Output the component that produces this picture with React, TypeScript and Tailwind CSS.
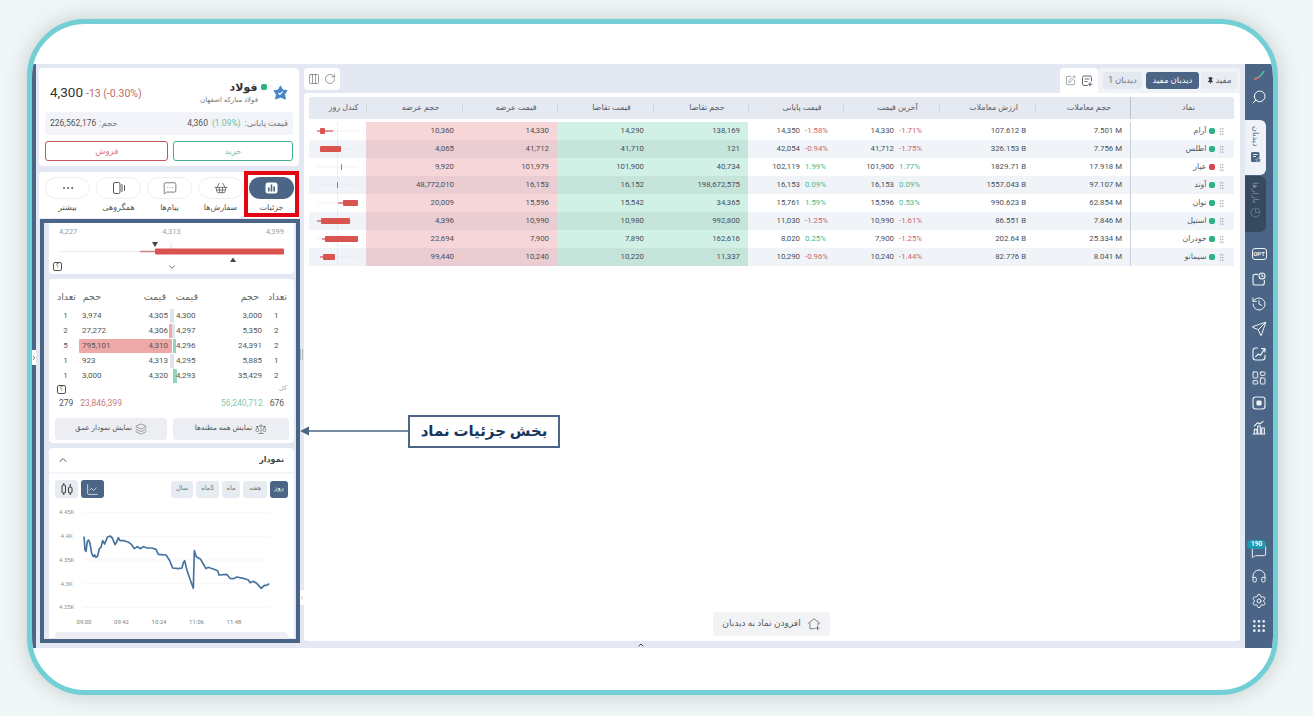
import {
  ChartColumnBig,
  ChartLine,
  ChevronDown,
  ChevronLeft,
  ChevronRight,
  ChevronUp,
  Ellipsis,
  Grip,
  GripVertical,
  Headphones,
  History,
  LayoutDashboard,
  Layers,
  MessageSquareMore,
  Pin,
  RotateCw,
  Scale,
  Search,
  Send,
  Settings,
  ShoppingBasket,
  SquarePen,
  Columns3,
  MessageSquare,
  PieChart,
} from "lucide-react";

const rows = [
  { name: "آرام", up: true, vol: "7.501 M", value: "107.612 B", last: "14,330", lastPct: "-1.71%", close: "14,350", closePct: "-1.58%", bidVol: "138,169", bid: "14,290", ask: "14,330", askVol: "10,360", candle: [11, 16, 8, 24] },
  { name: "اطلس", up: true, vol: "7.756 M", value: "326.153 B", last: "41,712", lastPct: "-1.75%", close: "42,054", closePct: "-0.94%", bidVol: "121", bid: "41,710", ask: "41,712", askVol: "4,065", candle: [11, 32, 11, 32] },
  { name: "عیار", up: false, vol: "17.918 M", value: "1829.71 B", last: "101,900", lastPct: "1.77%", close: "102,119", closePct: "1.99%", bidVol: "40,734", bid: "101,900", ask: "101,979", askVol: "9,920", candle: [32, 32.6, 32, 32.6] },
  { name: "آوند", up: true, vol: "97.107 M", value: "1557.043 B", last: "16,153", lastPct: "0.09%", close: "16,153", closePct: "0.09%", bidVol: "198,672,575", bid: "16,152", ask: "16,153", askVol: "48,772,010", candle: [28.2, 28.8, 28.2, 28.8] },
  { name: "توان", up: true, vol: "62.854 M", value: "990.623 B", last: "15,596", lastPct: "0.53%", close: "15,761", closePct: "1.59%", bidVol: "34,365", bid: "15,542", ask: "15,596", askVol: "20,009", candle: [34, 49, 29, 49] },
  { name: "استیل", up: true, vol: "7.846 M", value: "86.551 B", last: "10,990", lastPct: "-1.61%", close: "11,030", closePct: "-1.25%", bidVol: "992,800", bid: "10,980", ask: "10,990", askVol: "4,396", candle: [12, 41, 8, 41] },
  { name: "خودران", up: true, vol: "25.334 M", value: "202.64 B", last: "7,900", lastPct: "-1.25%", close: "8,020", closePct: "0.25%", bidVol: "162,616", bid: "7,890", ask: "7,900", askVol: "22,694", candle: [16, 49, 13, 49] },
  { name: "سیمانو", up: true, vol: "8.041 M", value: "82.776 B", last: "10,240", lastPct: "-1.44%", close: "10,290", closePct: "-0.96%", bidVol: "11,337", bid: "10,220", ask: "10,240", askVol: "99,440", candle: [14, 26, 11, 26] },
];

const depth = [
  { sc: "1", sv: "3,974", sp: "4,305", bp: "4,300", bv: "3,000", bc: "1", red: "w-0", right: "left-[115px] w-[4px] bg-[#dfe3ea]" },
  { sc: "2", sv: "27,272", sp: "4,306", bp: "4,297", bv: "5,350", bc: "2", red: "w-[3.5px]", right: "left-[117px] w-[2.5px] bg-[#dfe3ea]" },
  { sc: "5", sv: "795,101", sp: "4,310", bp: "4,296", bv: "24,391", bc: "2", red: "w-[93px]", right: "left-[118px] w-[2.5px] bg-[#8fd6bc]" },
  { sc: "1", sv: "923", sp: "4,313", bp: "4,295", bv: "5,885", bc: "1", red: "w-0", right: "left-[115px] w-[4px] bg-[#dfe3ea]" },
  { sc: "1", sv: "3,000", sp: "4,320", bp: "4,293", bv: "35,429", bc: "2", red: "w-0", right: "left-[118px] w-[3.5px] bg-[#8fd6bc]" },
];

const linePoints =
  "162,290 165,330 168,334 172,304 176,300 180,310 185,340 190,350 194,345 198,352 203,348 208,326 213,322 218,302 224,312 232,292 240,288 247,294 255,314 260,306 265,293 270,302 282,302 296,307 305,314 313,326 322,320 332,326 340,320 352,324 365,324 378,328 385,343 408,345 418,360 428,384 445,386 456,384 460,368 464,362 470,388 480,418 490,445 493,332 499,350 512,358 520,372 528,386 534,382 552,388 563,392 567,405 590,403 600,415 612,416 620,411 640,415 655,420 660,428 670,424 680,430 694,445 703,436 710,436 718,431";

function Dot({ up }: { up: boolean }) {
  return <span className={`h-[6.5px] w-[6.5px] rounded-[2px] ${up ? "bg-[#2bb184]" : "bg-[#d9444a]"}`} />;
}

function Candle({ c }: { c: number[] }) {
  const green = c[0] === 28.2;
  return (
    <svg width="57" height="18" viewBox="0 0 57 18">
      <line x1="8" y1="9" x2="49" y2="9" stroke="#e6e8ec" strokeWidth="0.6" />
      <line x1="28.5" y1="0" x2="28.5" y2="18" stroke="#c4ccd6" strokeWidth="0.6" strokeDasharray="1 1" />
      {green ? (
        <rect x="28" y="6" width="1" height="6" fill="#2bb184" />
      ) : c[1] - c[0] < 2 ? (
        <rect x="32" y="6" width="0.8" height="6" fill="#b5484c" />
      ) : (
        <>
          <rect x={c[2]} y="8.4" width={c[3] - c[2]} height="1.2" fill="#d9534f" />
          <rect x={c[0]} y="6" width={c[1] - c[0]} height="6" rx="1" fill="#d9534f" />
        </>
      )}
    </svg>
  );
}

function Pct({ v }: { v: string }) {
  return <span className={`w-[25px] text-left ${v.startsWith("-") ? "text-[#c9686b]" : "text-[#3fb98f]"}`}>{v}</span>;
}

function HeaderCell({ label, divider = true, strong = false }: { label: string; divider?: boolean; strong?: boolean }) {
  return (
    <div className={`flex h-[22px] items-center justify-center ${strong ? "border-l border-[#b9c2cf]" : ""}`}>
      <span className="flex-1 pl-[12px] text-center">{label}</span>
      {divider && !strong && <span className="h-[9px] w-px bg-[#cfd6e0]" />}
    </div>
  );
}

function WatchTable() {
  const cols = "grid grid-cols-[104px_95px_96px_96px_95px_95px_96px_95px_96px_57px]";
  return (
    <div dir="rtl" className="ml-[5px] mr-[6px] mt-[4px] text-[7.8px] text-[#4a4f57]">
      <div className={`${cols} rounded-t-[3px] bg-[#e4e9f2] text-[8px] text-[#555b64]`}>
        <HeaderCell label="نماد" strong />
        <HeaderCell label="حجم معاملات" />
        <HeaderCell label="ارزش معاملات" />
        <HeaderCell label="آخرین قیمت" />
        <HeaderCell label="قیمت پایانی" />
        <HeaderCell label="حجم تقاضا" />
        <HeaderCell label="قیمت تقاضا" />
        <HeaderCell label="قیمت عرضه" />
        <HeaderCell label="حجم عرضه" />
        <HeaderCell label="کندل روز" divider={false} />
      </div>
      <div className="mt-[3px]">
        {rows.map((r, i) => {
          const alt = i % 2 === 1;
          return (
            <div key={r.name} className={`${cols} h-[18px] items-center ${alt ? "bg-[#f0f4f9]" : "bg-white"}`}>
              <div className="flex h-full items-center gap-[2px] border-l border-[#c9d0da] pr-[8px]">
                <GripVertical className="h-[9px] w-[9px] text-[#9aa3ad]" strokeWidth={1.5} />
                <Dot up={r.up} />
                <span className="text-[#555b64]">{r.name}</span>
              </div>
              <div dir="ltr" className="pr-[8px] text-right">{r.vol}</div>
              <div dir="ltr" className="pr-[9px] text-right">{r.value}</div>
              <div dir="ltr" className="flex gap-[5px] pr-[15px]">
                <span className="flex-1 text-right">{r.last}</span>
                <Pct v={r.lastPct} />
              </div>
              <div dir="ltr" className="flex gap-[5px] pr-[13px]">
                <span className="flex-1 text-right">{r.close}</span>
                <Pct v={r.closePct} />
              </div>
              <div dir="ltr" className={`flex h-full items-center justify-end pr-[8px] ${alt ? "bg-[#c5e4da]" : "bg-[#d1f1e6]"}`}>{r.bidVol}</div>
              <div dir="ltr" className={`flex h-full items-center justify-end pr-[9px] ${alt ? "bg-[#c5e4da]" : "bg-[#d1f1e6]"}`}>{r.bid}</div>
              <div dir="ltr" className={`flex h-full items-center justify-end pr-[8px] ${alt ? "bg-[#e9cdd2]" : "bg-[#f6d6d8]"}`}>{r.ask}</div>
              <div dir="ltr" className={`flex h-full items-center justify-end pr-[8px] ${alt ? "bg-[#e9cdd2]" : "bg-[#f6d6d8]"}`}>{r.askVol}</div>
              <div dir="ltr" className="h-[18px] overflow-hidden"><Candle c={r.candle} /></div>
            </div>
          );
        })}
      </div>
    </div>
  );
}

function MainPanel() {
  return (
    <div className="flex w-[941px] flex-col pr-[5px]">
      <div dir="ltr" className="flex h-[29px] items-start justify-between pt-[4px]">
        <div className="flex h-[22px] w-[36px] items-center justify-center gap-[4px] rounded-[4px] bg-white text-[#555b64]">
          <Columns3 className="h-[12px] w-[12px]" strokeWidth={1.2} />
          <RotateCw className="h-[12px] w-[12px]" strokeWidth={1.2} />
        </div>
        <div className="flex items-start">
          <div className="flex h-[25px] w-[38px] items-center justify-center gap-[5px] rounded-t-[4px] bg-white text-[#555b64]">
            <SquarePen className="h-[11px] w-[11px]" strokeWidth={1.2} />
            <svg width="12" height="12" viewBox="0 0 24 24" fill="none" stroke="currentColor" strokeWidth="1.800" strokeLinecap="round">
              <path d="M13 21H6a3 3 0 0 1-3-3V5a3 3 0 0 1 3-3h12a3 3 0 0 1 3 3v7" />
              <path d="M8 8h8M8 13h4M18 15v7M14.500 18.500h7" />
            </svg>
          </div>
          <div dir="rtl" className="flex h-[25px] w-[142px] items-start gap-[2px] rounded-t-[4px] bg-[#f0f3f8] pr-[3px] pt-[4px] text-[8.5px]">
            <span className="flex h-[17px] w-[36px] items-center justify-center gap-[2px] rounded-[3px] bg-[#e9ecf3] text-[#555b64]">
              مفید
              <Pin className="h-[7px] w-[7px] fill-[#333] text-[#333]" />
            </span>
            <span className="flex h-[17px] w-[53px] items-center justify-center rounded-[3px] bg-[#4a6585] text-white">دیدبان مفید</span>
            <span className="mr-[2px] flex h-[17px] w-[39px] items-center justify-center rounded-[3px] bg-[#e4e8f0] text-[#6b7280]">دیدبان 1</span>
          </div>
        </div>
      </div>
      <div className="relative h-[548px] rounded-[3px] bg-white">
        <WatchTable />
        <div dir="rtl" className="absolute bottom-[5px] left-[409px] flex h-[24px] w-[117px] items-center justify-center gap-[6px] rounded-[4px] bg-[#f2f3f5] text-[9px] text-[#555b64]">
          <svg width="14" height="14" viewBox="0 0 24 24" fill="none" stroke="currentColor" strokeWidth="1.300" strokeLinecap="round">
            <path d="M2 11 12 3l10 8M5 11v9h8M19 11v3M18 16v6M15 19h6" />
          </svg>
          <span>افزودن نماد به دیدبان</span>
        </div>
      </div>
    </div>
  );
}

function SymbolCard() {
  return (
    <div className="h-[98px] rounded-[4px] bg-white px-[6px]">
      <div dir="ltr" className="flex h-[44px] items-center justify-between pl-[5px] pr-[5px] pt-[4px]">
        <div className="flex items-baseline gap-[3px]">
          <span className="text-[13.5px] text-[#333]">4,300</span>
          <span className="text-[10.5px] text-[#bd6a6c]">-13 (-0.30%)</span>
        </div>
        <div className="flex items-center gap-[6px]">
          <div dir="rtl" className="flex flex-col">
            <div className="flex items-center gap-[3px]">
              <span className="h-[6.5px] w-[6.5px] rounded-[2px] bg-[#2bb184]" />
              <span className="text-[11px] font-semibold leading-[15px] text-[#333]">فولاد</span>
            </div>
            <span className="pr-[9px] text-[7px] leading-[10px] text-[#777]">فولاد مبارکه اصفهان</span>
          </div>
          <svg width="15" height="15" viewBox="0 0 24 24">
            <path d="M12 1.500 15.500 8 22.500 9 18.500 15 20 22.500 12 19.500 4 22.500 5.500 15 1.500 9 8.500 8Z" fill="#4a86c5" stroke="#4a86c5" strokeWidth="1.500" strokeLinejoin="round" />
            <path d="M8.500 12.500l2.500 2.500 4.500-4.500" fill="none" stroke="#fff" strokeWidth="1.800" />
          </svg>
        </div>
      </div>
      <div dir="ltr" className="flex h-[23px] items-center justify-between rounded-[3px] bg-[#f2f4f9] px-[5px] text-[8.5px] text-[#555]">
        <span className="flex gap-[3px]">
          <span>226,562,176</span>
          <span className="text-[#777]">:حجم</span>
        </span>
        <span className="flex gap-[4px]">
          <span>4,360</span>
          <span className="text-[#6cbf9d]">(1.09%)</span>
          <span className="text-[#777]">:قیمت پایانی</span>
        </span>
      </div>
      <div dir="ltr" className="mt-[6px] flex gap-[5px] text-[8.5px]">
        <button className="h-[20px] w-[124px] rounded-[3px] border-[1.5px] border-[#c3575b] text-[#cf7d80]">فروش</button>
        <button className="h-[20px] w-[120px] rounded-[3px] border-[1.5px] border-[#46ad8b] text-[#74bfa4]">خرید</button>
      </div>
    </div>
  );
}

function DetailsGlyph() {
  return (
    <svg width="13" height="12" viewBox="0 0 13 12">
      <rect x="0.500" y="0.500" width="12" height="11" rx="2.500" fill="#fff" />
      <path d="M3 5.500h1.600V9.500H3zM5.700 2.500h1.600v7H5.700zM8.400 4.500H10v5H8.400z" fill="#4a6585" />
    </svg>
  );
}

function GroupGlyph() {
  return (
    <svg width="14" height="14" viewBox="0 0 14 14" fill="none" stroke="currentColor" strokeWidth="1">
      <rect x="1.500" y="1.500" width="6.500" height="11" rx="1.500" />
      <path d="M10 3.500v7M12.500 4.500v5" strokeLinecap="round" />
    </svg>
  );
}

function ActionTabs() {
  const iconCls = "h-[14px] w-[14px]";
  const items = [
    { label: "جزئیات", icon: <DetailsGlyph />, active: true },
    { label: "سفارش‌ها", icon: <ShoppingBasket className={iconCls} strokeWidth={1.3} /> },
    { label: "پیام‌ها", icon: <MessageSquareMore className={iconCls} strokeWidth={1.3} /> },
    { label: "همگروهی", icon: <GroupGlyph /> },
    { label: "بیشتر", icon: <Ellipsis className={iconCls} strokeWidth={1.6} /> },
  ];
  return (
    <div dir="rtl" className="mt-[6px] flex h-[46px] gap-[6px] rounded-t-[4px] bg-white px-[5px] pt-[5px]">
      {items.map(({ label, icon, active }) => (
        <div key={label} className="flex w-[45px] flex-col items-center">
          <div className={`flex h-[22px] w-full items-center justify-center rounded-full ${active ? "bg-[#4a6585] text-white" : "border border-[#eceef2] text-[#555]"}`}>
            {icon}
          </div>
          <span className="mt-[2px] whitespace-nowrap text-[8px] leading-[14px] text-[#555]">{label}</span>
        </div>
      ))}
    </div>
  );
}

function Help() {
  return <span className="flex h-[9px] w-[9px] items-center justify-center rounded-[2px] border border-[#555] text-[6.5px] leading-none text-[#555]">؟</span>;
}

function RangeCard() {
  return (
    <div className="relative h-[51px] rounded-b-[4px] bg-white text-[7.5px] text-[#9aa0a8]">
      <div className="flex justify-between px-[10px] pt-[3px]">
        <span>4,227</span>
        <span>4,313</span>
        <span>4,399</span>
      </div>
      <svg className="mt-[2px] ml-[10px]" width="226" height="23" viewBox="0 0 226 23">
        <line x1="0" y1="12.5" x2="82" y2="12.5" stroke="#eeeeee" strokeWidth="1.500" />
        <line x1="81" y1="12.500" x2="96" y2="12.500" stroke="#cf8183" strokeWidth="1.500" />
        <line x1="112" y1="3" x2="112" y2="12" stroke="#e2e4e8" />
        <rect x="96" y="9.500" width="129" height="6" rx="1" fill="#d9534f" />
        <polygon points="93,3 99,3 96,8" fill="#444" />
        <polygon points="171,23 177,23 174,18.500" fill="#444" />
      </svg>
      <div className="absolute bottom-[3px] left-[4px]"><Help /></div>
      <ChevronDown className="absolute bottom-[2px] left-[118px] h-[10px] w-[10px] text-[#555]" />
    </div>
  );
}

function DepthCard() {
  return (
    <div dir="ltr" className="mt-[5px] h-[164px] rounded-[4px] bg-white px-[6px] text-[8px] text-[#555]">
      <div dir="rtl" className="flex h-[24px] items-end text-[9.5px] leading-[13px] text-[#666]">
        <span className="w-[29px] whitespace-nowrap pr-[1px]">تعداد</span>
        <span className="w-[61px] whitespace-nowrap">حجم</span>
        <span className="w-[32px] whitespace-nowrap">قیمت</span>
        <span className="w-[65px] whitespace-nowrap">قیمت</span>
        <span className="w-[25px] whitespace-nowrap">حجم</span>
        <span className="whitespace-nowrap">تعداد</span>
      </div>
      <div className="mt-[5px]">
        {depth.map((d) => (
          <div key={d.sp} className="relative flex h-[15px] items-center">
            <span className={`absolute right-[116px] top-[0.5px] h-[14px] rounded-l-[1px] bg-[#eda8a8] ${d.red}`} />
            <span className={`absolute top-[0.5px] h-[14px] ${d.right}`} />
            <span className="relative w-[21px] text-center">{d.sc}</span>
            <span className="relative w-[70px] pl-[6px]">{d.sv}</span>
            <span className="relative w-[22px] text-right">{d.sp}</span>
            <span className="relative ml-[8px] w-[50px]">{d.bp}</span>
            <span className="relative w-[36px] text-right">{d.bv}</span>
            <span className="relative flex-1 pl-[12px]">{d.bc}</span>
          </div>
        ))}
      </div>
      <div className="flex h-[12px] items-center justify-between pl-[2px] pr-[1px]">
        <Help />
        <span className="text-[6.5px] text-[#aaa]">کل</span>
      </div>
      <div className="mt-[2px] flex items-center justify-between px-[4px] text-[8.5px]">
        <span className="flex gap-[7px]">
          <span>279</span>
          <span className="text-[#c47c7e]">23,846,399</span>
        </span>
        <span className="flex gap-[7px]">
          <span className="text-[#7fc9aa]">56,240,712</span>
          <span>676</span>
        </span>
      </div>
      <div className="-mr-px mt-[8px] flex justify-between text-[7.3px]">
        <button className="flex h-[22px] w-[112px] items-center justify-center gap-[3px] rounded-[4px] bg-[#eceef4]">
          <span>نمایش نمودار عمق</span>
          <Layers className="h-[12px] w-[12px]" strokeWidth={1.1} />
        </button>
        <button className="flex h-[22px] w-[116px] items-center justify-center gap-[3px] rounded-[4px] bg-[#eceef4]">
          <span>نمایش همه مظنه‌ها</span>
          <Scale className="h-[12px] w-[12px]" strokeWidth={1.1} />
        </button>
      </div>
    </div>
  );
}

function ChartCard() {
  const ranges = [
    { l: "روز", w: "w-[18px]", on: true },
    { l: "هفته", w: "w-[24px]" },
    { l: "ماه", w: "w-[18px]" },
    { l: "3ماه", w: "w-[23px]" },
    { l: "سال", w: "w-[22px]" },
  ];
  return (
    <div className="mt-[5px] h-[190px] rounded-t-[4px] bg-white">
      <div dir="ltr" className="flex h-[26px] items-center justify-between border-b-2 border-[#f3f5f9] pl-[8px] pr-[10px]">
        <ChevronUp className="h-[12px] w-[12px] text-[#555]" />
        <span className="text-[8px] font-bold text-[#444]">نمودار</span>
      </div>
      <div dir="ltr" className="flex items-center justify-between px-[6px] pt-[6px]">
        <div className="flex gap-[3px]">
          <span className="flex h-[18px] w-[23px] items-center justify-center rounded-[3px] bg-[#e7ebf2] text-[#444]">
            <svg width="14" height="14" viewBox="0 0 14 14" fill="none" stroke="currentColor" strokeWidth="1.100">
              <rect x="2" y="3" width="3.500" height="8" rx="1.500" />
              <rect x="8.500" y="5" width="3.500" height="6" rx="1.500" />
              <path d="M3.750 1v2M3.750 11v2M10.250 2v3M10.250 11v2" />
            </svg>
          </span>
          <span className="flex h-[18px] w-[23px] items-center justify-center rounded-[3px] bg-[#4a6585] text-white">
            <ChartLine className="h-[13px] w-[13px]" strokeWidth={1.3} />
          </span>
        </div>
        <div dir="rtl" className="flex gap-[3px] text-[6.5px]">
          {ranges.map((r) => (
            <span key={r.l} className={`flex h-[17px] items-center justify-center rounded-[3px] ${r.w} ${r.on ? "bg-[#4a6585] text-white" : "bg-[#e7ebf2] text-[#777]"}`}>{r.l}</span>
          ))}
        </div>
      </div>
      <svg className="mt-[7px]" width="245" height="126" viewBox="57 195 735 378">
        {[217, 289, 360, 431, 502].map((y, i) => (
          <g key={y}>
            <line x1="160" y1={y} x2="718" y2={y} stroke="#eef0f4" strokeWidth="2" />
            <text x="110" y={y + 6} textAnchor="middle" fontSize="18" fill="#8a9099">{["4.45K", "4.4K", "4.35K", "4.3K", "4.25K"][i]}</text>
          </g>
        ))}
        {["09:00", "09:42", "10:24", "11:06", "11:48"].map((t, i) => (
          <text key={t} x={162 + i * 112.500} y="551" textAnchor="middle" fontSize="18" fill="#7c828b">{t}</text>
        ))}
        <polyline points={linePoints} fill="none" stroke="#44739f" strokeWidth="5" strokeLinejoin="round" />
      </svg>
      <div className="mx-[6px] mt-[1px] h-[12px] rounded-t-[4px] bg-[#eceef4]" />
    </div>
  );
}

function LeftPanel() {
  return (
    <div className="relative flex h-[577px] w-[268px] flex-col pl-[3px] pr-[5px] pt-[4px]">
      <SymbolCard />
      <ActionTabs />
      <div className="mt-[5px] h-[417px] overflow-hidden pl-[10px] pr-[5px]">
        <RangeCard />
        <DepthCard />
        <ChartCard />
      </div>
    </div>
  );
}

function RailIcon({ children }: { children: React.ReactNode }) {
  return <div className="flex h-[24.8px] items-center justify-center text-[#eef2f6]">{children}</div>;
}

function RailSvg({ children }: { children: React.ReactNode }) {
  return (
    <svg width="16" height="16" viewBox="0 0 24 24" fill="none" stroke="currentColor" strokeWidth="1.700" strokeLinecap="round" strokeLinejoin="round">
      {children}
    </svg>
  );
}

function Sidebar() {
  const cls = "h-[16px] w-[16px]";
  return (
    <div className="relative flex h-[584px] w-[28px] flex-col bg-[#4a6585]">
      <svg className="ml-[8px] mt-[6px]" width="12" height="10" viewBox="0 0 12 10">
        <path d="M1 9 C5 8 9 5 11 1" fill="none" stroke="#52c7a6" strokeWidth="1.600" />
        <path d="M1 9 C3 9 5 8 6 7" fill="none" stroke="#e0696b" strokeWidth="1.600" />
      </svg>
      <Search className="ml-[6px] mt-[9px] h-[16px] w-[16px] -scale-x-100 text-white" strokeWidth={1.5} />
      <div className="mt-[15px] flex h-[55px] w-[21px] flex-col items-center rounded-r-[6px] bg-[#eff2f7] pt-[6px] text-[#4a6585]">
        <span className="text-[8px] leading-[21px] [writing-mode:vertical-rl]">دیدبان</span>
        <svg className="mt-[4px]" width="12" height="12" viewBox="0 0 12 12">
          <rect x="1" y="1" width="8.500" height="10" rx="1.500" fill="#4a6585" />
          <path d="M3 3.500h4.500M3 5.500h3" stroke="#fff" strokeWidth="0.800" />
          <path d="M8.500 6.500l1 1.700 1.800.3-1.300 1.300.3 1.700-1.800-.8-1.800.8.300-1.700-1.300-1.300 1.800-.3z" fill="#4a6585" stroke="#eff2f7" strokeWidth="0.500" />
        </svg>
      </div>
      <div className="mt-[1px] flex h-[56px] w-[21px] flex-col items-center rounded-r-[6px] bg-[#36495f] pt-[6px] text-[#7d8fa5]">
        <span className="text-[8px] leading-[21px] [writing-mode:vertical-rl]">بازارها</span>
        <PieChart className="mt-[4px] h-[11px] w-[11px]" strokeWidth={1.5} />
      </div>
      <div className="mt-[10px] flex flex-col">
        <RailIcon>
          <span className="flex h-[12px] w-[15px] items-center justify-center rounded-[3px] border border-[#eef2f6] text-[6px] font-bold leading-none">OPT</span>
        </RailIcon>
        <RailIcon>
          <RailSvg>
            <path d="M10 5H6a3 3 0 0 0-3 3v10a3 3 0 0 0 3 3h11a3 3 0 0 0 3-3v-4" />
            <circle cx="16.500" cy="7.500" r="4.500" />
            <path d="M16.500 5.500v2l1.500 1" />
          </RailSvg>
        </RailIcon>
        <RailIcon><History className={cls} strokeWidth={1.5} /></RailIcon>
        <RailIcon><Send className={cls} strokeWidth={1.5} /></RailIcon>
        <RailIcon>
          <RailSvg>
            <path d="M10 3H7a4 4 0 0 0-4 4v10a4 4 0 0 0 4 4h10a4 4 0 0 0 4-4v-3" />
            <path d="M7 16l4-4 3 2 6-9M16 4h5v5" />
          </RailSvg>
        </RailIcon>
        <RailIcon><LayoutDashboard className={cls} strokeWidth={1.5} /></RailIcon>
        <RailIcon>
          <RailSvg>
            <rect x="3" y="3" width="18" height="18" rx="4" />
            <rect x="9" y="9" width="6" height="6" rx="1" fill="currentColor" />
          </RailSvg>
        </RailIcon>
        <RailIcon>
          <RailSvg>
            <path d="M3 21h18M5 21v-7h4v7M10 21V9h4v12M16 21v-9h4v9M5 9l5-5 3 2 5-4" />
          </RailSvg>
        </RailIcon>
      </div>
      <div className="absolute bottom-[10px] left-0 flex w-full flex-col">
        <div className="relative">
          <RailIcon><MessageSquare className={cls} strokeWidth={1.5} /></RailIcon>
          <span className="absolute left-[2px] top-[1px] rounded-full bg-[#1d9bb2] px-[4px] text-[6.5px] font-bold leading-[9px] text-white">190</span>
        </div>
        <RailIcon><Headphones className={cls} strokeWidth={1.5} /></RailIcon>
        <RailIcon><Settings className={cls} strokeWidth={1.5} /></RailIcon>
        <RailIcon><Grip className={cls} strokeWidth={2} /></RailIcon>
      </div>
    </div>
  );
}

export default function App() {
  return (
    <div dir="ltr" className="relative h-[716px] w-[1313px] overflow-hidden bg-[#f1f7f6] pl-[27px] pt-[19px] font-['Roboto','DejaVu_Sans',sans-serif]">
      <div className="h-[676px] w-[1251px] overflow-hidden rounded-[58px] border-[5px] border-[#72cfd6] bg-white shadow-[0_0_22px_rgba(70,90,90,0.28)]">
        <div className="mt-[40px] flex h-[584px] bg-[#e4e8f2]">
          <div className="w-[4px] bg-[#4a6585]" />
          <div className="flex h-full flex-col">
            <div className="flex">
              <LeftPanel />
              <MainPanel />
            </div>
            <div className="flex h-[7px] justify-center overflow-hidden">
              <ChevronUp className="h-[8px] w-[8px] text-[#444]" strokeWidth={3} />
            </div>
          </div>
          <Sidebar />
        </div>
      </div>

      {/* annotation overlays and resize handles */}
      <div className="absolute left-[244px] top-[171px] h-[46px] w-[55px] border-[4px] border-[#e20613]" />
      <div className="absolute left-[40px] top-[219px] h-[424px] w-[260px] border-[4px] border-[#4a6585]" />
      <div className="absolute left-[32px] top-[350px] flex h-[15px] w-[4px] items-center justify-center bg-white">
        <ChevronRight className="h-[6px] w-[6px] shrink-0 text-[#333]" strokeWidth={3} />
      </div>
      <div className="absolute left-[300px] top-[349px] flex h-[11px] w-[3px] justify-between">
        <span className="w-px bg-[#aeb6c2]" />
        <span className="w-px bg-[#aeb6c2]" />
      </div>
      <div className="absolute left-[300px] top-[590px] flex h-[15px] w-[4px] items-center justify-center rounded-l-[2px] bg-white">
        <ChevronLeft className="h-[6px] w-[6px] shrink-0 text-[#888]" strokeWidth={2} />
      </div>
      <div className="absolute left-[300px] top-[424px] flex items-center">
        <svg width="108" height="14" viewBox="0 0 108 14">
          <polygon points="0,7 9,2.500 9,11.500" fill="#4a6585" />
          <line x1="8" y1="7" x2="108" y2="7" stroke="#4a6585" strokeWidth="1.500" />
        </svg>
      </div>
      <div dir="rtl" className="absolute left-[408px] top-[415px] flex h-[33px] w-[152px] items-center justify-center border-2 border-[#4a6585] bg-white text-[15px] font-bold text-[#17375e]">
        بخش جزئیات نماد
      </div>
    </div>
  );
}
